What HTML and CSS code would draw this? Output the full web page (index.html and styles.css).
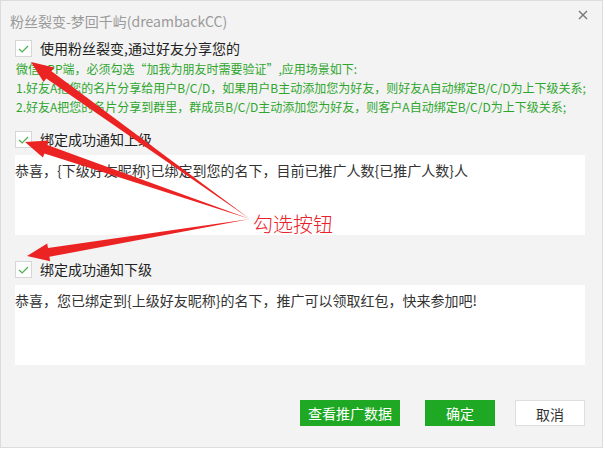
FILE: index.html
```html
<!DOCTYPE html>
<html lang="zh-CN">
<head>
    <meta charset="UTF-8">
    <meta name="viewport" content="width=device-width, initial-scale=1.0">
    <title>粉丝裂变</title>
    <link rel="stylesheet" href="styles.css">
</head>
<body>

    <div class="dialog">
        <!-- title bar -->
        <div class="title">粉丝裂变-梦回千屿(dreambackCC)</div>
        <span class="close">
            <svg width="10" height="10" viewBox="0 0 10 10"><path d="M1 1L9 9M9 1L1 9" stroke="#777" stroke-width="1.4"/></svg>
        </span>

        <div class="content">
            <!-- main switch -->
            <label class="check-row first">
                <span class="check"><svg width="11" height="8" viewBox="0 0 11 8"><path d="M1 4l3.2 3L10 1" fill="none" stroke="#4cb050" stroke-width="1.2"/></svg></span>
                <span class="check-label">使用粉丝裂变,通过好友分享您的</span>
            </label>
            <div class="tips">
                <p>微信APP端，必须勾选“加我为朋友时需要验证”,应用场景如下:</p>
                <p>1.好友A把您的名片分享给用户B/C/D，如果用户B主动添加您为好友，则好友A自动绑定B/C/D为上下级关系;</p>
                <p>2.好友A把您的名片分享到群里，群成员B/C/D主动添加您为好友，则客户A自动绑定B/C/D为上下级关系;</p>
            </div>

            <!-- notify upper -->
            <label class="check-row second">
                <span class="check"><svg width="11" height="8" viewBox="0 0 11 8"><path d="M1 4l3.2 3L10 1" fill="none" stroke="#4cb050" stroke-width="1.2"/></svg></span>
                <span class="check-label">绑定成功通知上级</span>
            </label>
            <textarea class="msg">恭喜，{下级好友昵称}已绑定到您的名下，目前已推广人数{已推广人数}人</textarea>

            <!-- notify lower -->
            <label class="check-row third">
                <span class="check"><svg width="11" height="8" viewBox="0 0 11 8"><path d="M1 4l3.2 3L10 1" fill="none" stroke="#4cb050" stroke-width="1.2"/></svg></span>
                <span class="check-label">绑定成功通知下级</span>
            </label>
            <textarea class="msg">恭喜，您已绑定到{上级好友昵称}的名下，推广可以领取红包，快来参加吧!</textarea>

            <!-- buttons -->
            <div class="actions">
                <button class="btn green wide">查看推广数据</button>
                <button class="btn green ok">确定</button>
                <button class="btn plain">取消</button>
            </div>
        </div>

        <!-- red annotation drawn over the dialog -->
        <svg class="marks" width="605" height="450" viewBox="0 0 605 450">
            <polygon fill="#ec2323" points="250,219 51.5,71.2 54.1,67.5 31,62 43.6,82.1 46.3,78.5"/>
            <polygon fill="#ec2323" points="250,219 47.3,144.9 48.7,140.6 25,142 42.9,157.6 44.4,153.4"/>
            <polygon fill="#ec2323" points="250,219 48,248 47.2,243.5 27,256 50.2,261.3 49.4,256.8"/>
        </svg>
        <span class="mark-text">勾选按钮</span>
    </div>

</body>
</html>
```

FILE: styles.css
```css
body {
    margin: 0;
    background-color: #ffffff;
    font-family: "Noto Sans CJK SC", "Noto Sans", sans-serif;
}

/* dialog box */
.dialog {
    position: relative;
    width: 601px;
    height: 446px;
    background-color: #f3f3f3;
    border: 1px solid #dcdcdc;
}

.title {
    padding: 10px 0 0 9px;
    font-size: 14px;
    line-height: 20px;
    color: #9a9a9a;
}

.close {
    position: absolute;
    top: 9px;
    right: 14px;
    line-height: 0;
}

.content {
    display: flex;
    flex-direction: column;
    padding: 0 14px;
}

/* checkbox rows */
.check-row {
    display: flex;
    align-items: center;
    gap: 8px;
    height: 17px;
}

.check-row.first { margin-top: 9px; }
.check-row.second { margin-top: 15px; }
.check-row.third { margin-top: 26px; }

.check {
    display: flex;
    align-items: center;
    justify-content: center;
    width: 15px;
    height: 15px;
    background-color: #ffffff;
    border: 1px solid #d6d6d6;
}

.check-label {
    font-size: 14px;
    line-height: 17px;
    color: #222222;
}

/* green hints */
.tips {
    margin-top: 2px;
    padding-left: 1px;
}

.tips p {
    margin: 0;
    font-size: 12px;
    line-height: 19px;
    color: #2ea62e;
    white-space: nowrap;
}

/* message boxes */
.msg {
    width: 570px;
    height: 80px;
    margin-top: 7px;
    padding: 5px 0 0 0;
    box-sizing: border-box;
    border: none;
    resize: none;
    outline: none;
    background-color: #ffffff;
    font-family: "Noto Sans CJK SC", "Noto Sans", sans-serif;
    font-size: 14px;
    line-height: 20px;
    color: #333333;
}

/* buttons */
.actions {
    display: flex;
    justify-content: flex-end;
    width: 570px;
    margin-top: 35px;
}

.btn {
    height: 26px;
    padding: 0;
    border: none;
    font-family: "Noto Sans CJK SC", "Noto Sans", sans-serif;
    font-size: 14px;
    line-height: 26px;
}

.btn.green {
    background-color: #1fa824;
    color: #ffffff;
}

.btn.wide { width: 100px; }
.btn.ok { width: 70px; margin-left: 25px; }

.btn.plain {
    width: 70px;
    margin-left: 20px;
    background-color: #ffffff;
    border: 1px solid #dedede;
    color: #333333;
}

/* annotation */
.marks {
    position: absolute;
    top: -1px;
    left: -1px;
}

.mark-text {
    position: absolute;
    top: 210px;
    left: 252px;
    font-size: 20px;
    font-weight: 300;
    line-height: 26px;
    color: #e8232b;
}
```
